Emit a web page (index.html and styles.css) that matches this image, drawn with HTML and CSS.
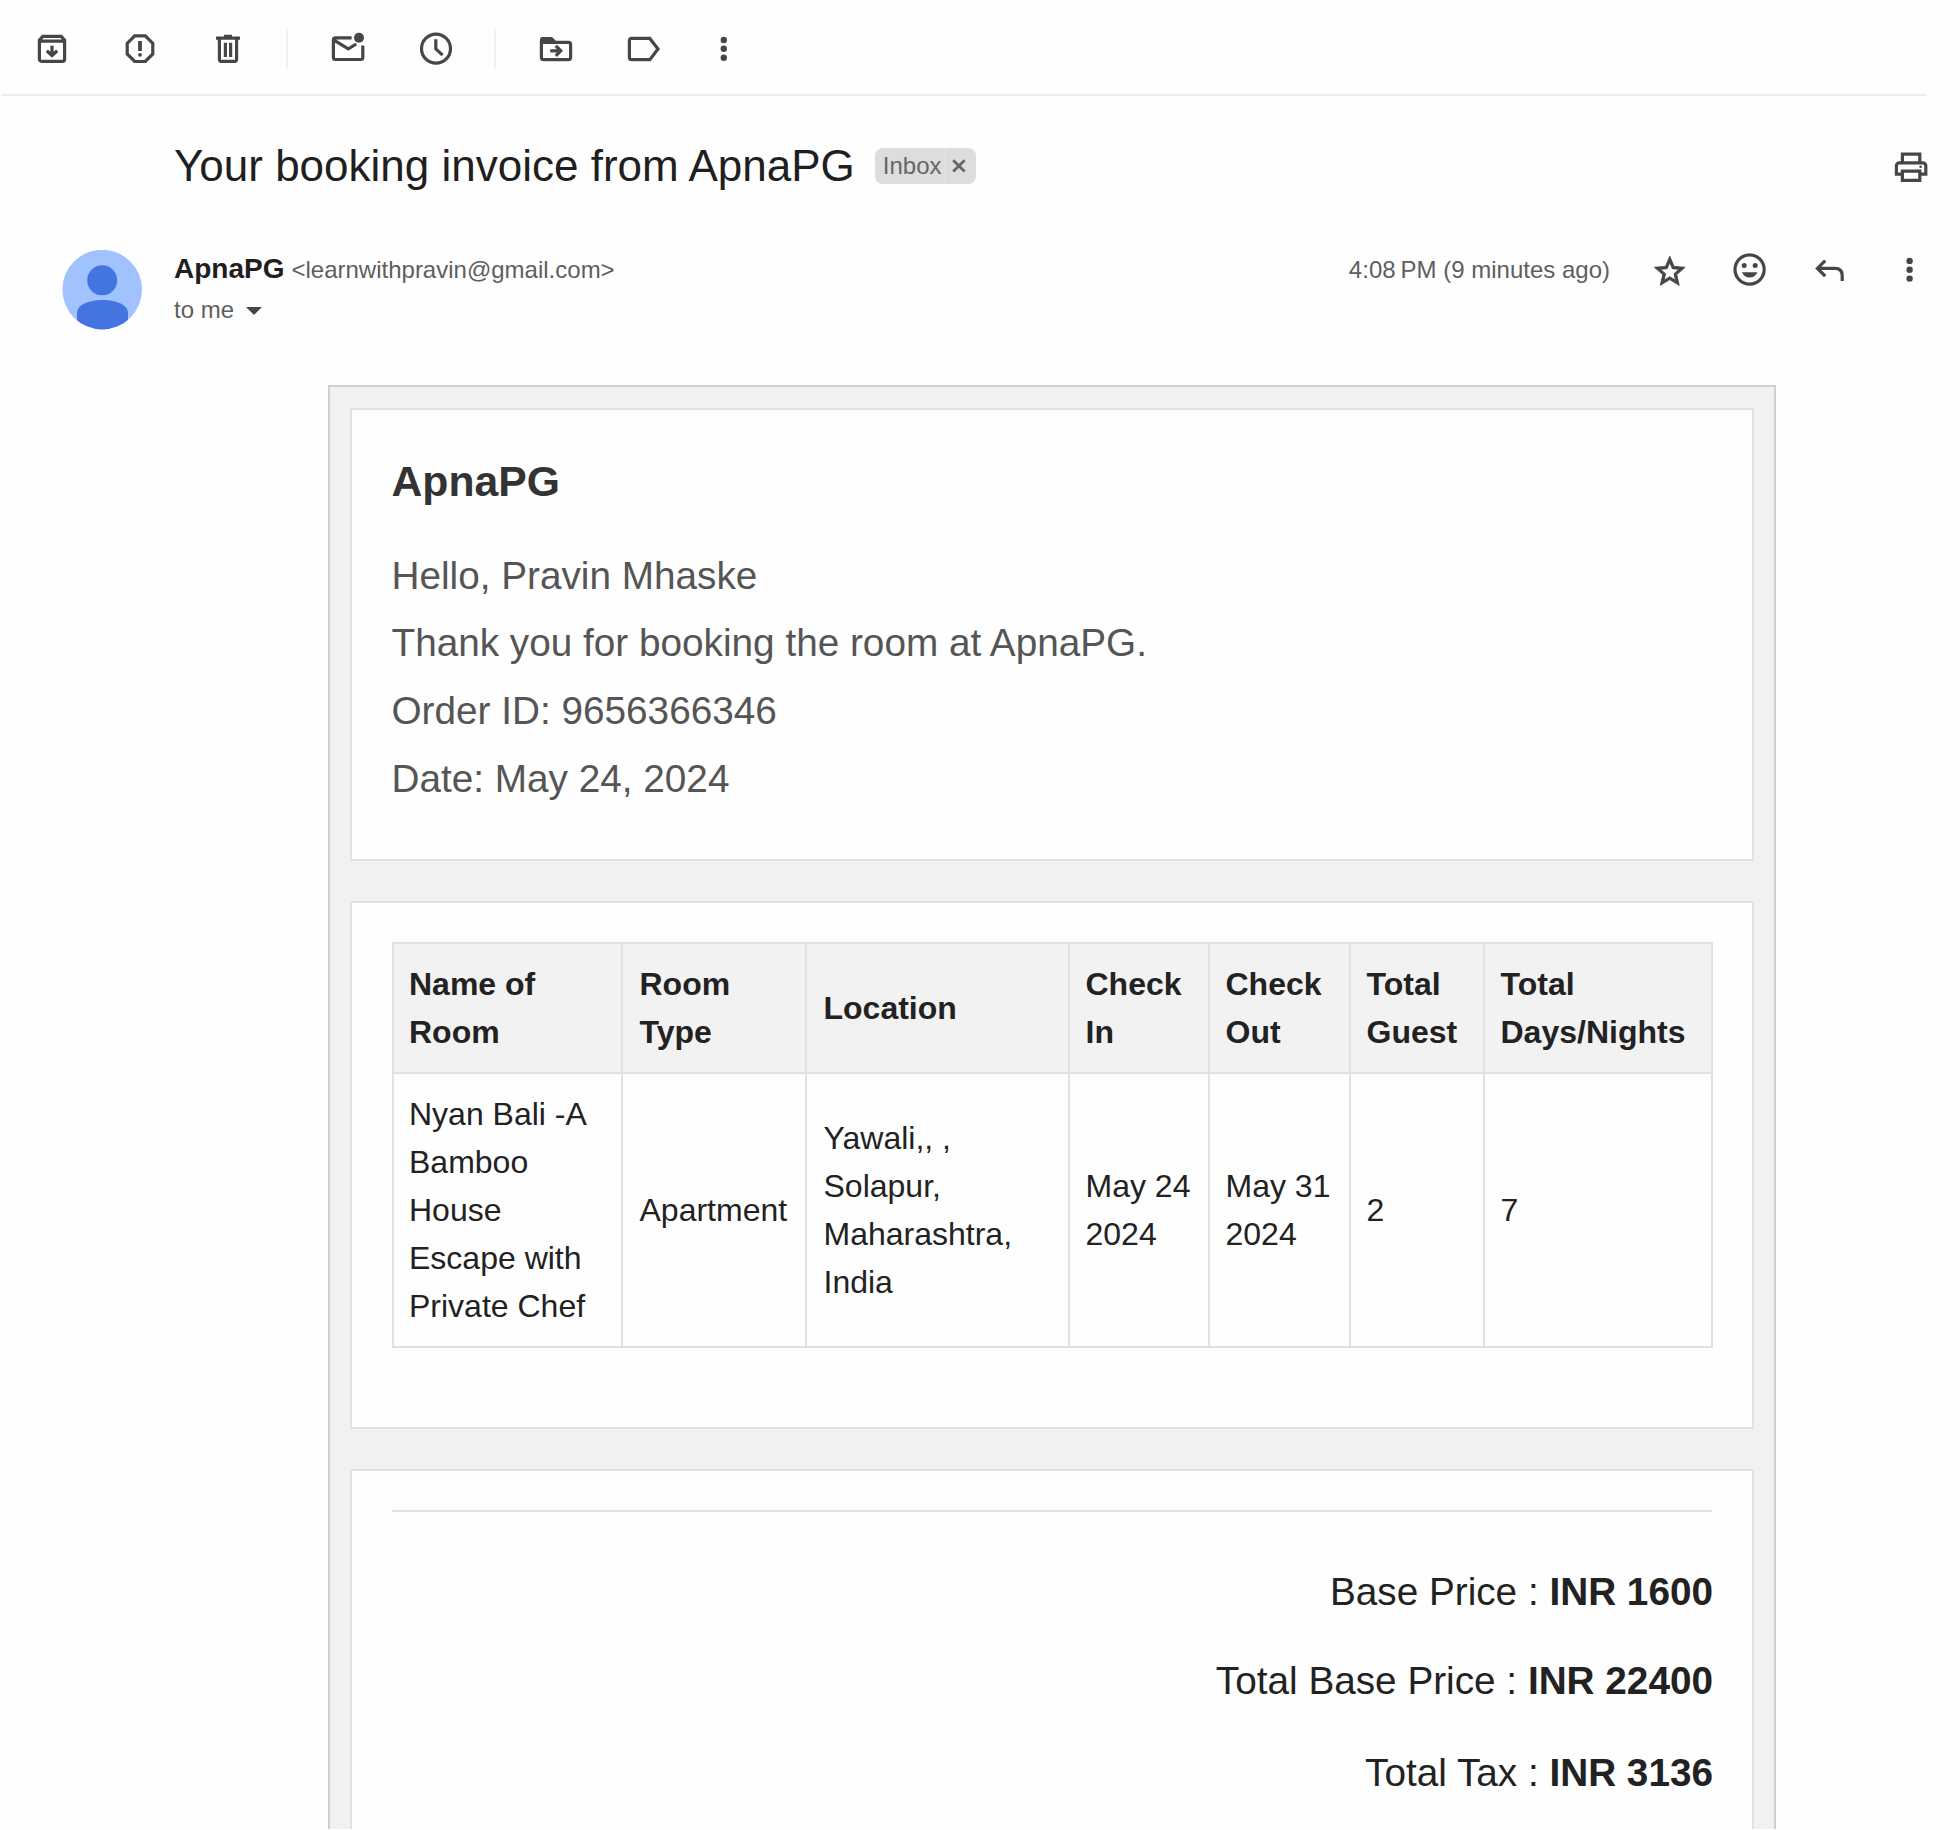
FILE: index.html
```html
<!DOCTYPE html>
<html lang="en">
<head>
<meta charset="utf-8">
<title>Your booking invoice from ApnaPG</title>
<link rel="stylesheet" href="styles.css">
</head>
<body>
<div class="page">
  <div class="toolbar">
    <div class="tool-group">
      <svg class="icon" viewBox="0 0 40 40"><path d="M7.4 13.3V31.3a2 2 0 0 0 2 2H30.6a2 2 0 0 0 2-2V12l-3.4-3.7H10.8L7.4 12v1.2H32.6M20 17.7v9M14.8 22.7l5.2 4.8 5.2-4.8"/></svg>
      <svg class="icon" viewBox="0 0 40 40"><path d="M14.7 7.9H25.3L32.8 15.4V26L25.3 33.5H14.7L7.2 26V15.4Z"/><path class="thick" d="M20 13v10"/><circle class="fill" cx="20" cy="26.8" r="1.9"/></svg>
      <svg class="icon" viewBox="0 0 40 40"><path d="M8 10.2H32M16 8.4h8M11.4 11V31.3a2 2 0 0 0 2 2H26.6a2 2 0 0 0 2-2V11M17.4 14.7v14.3M22.6 14.7v14.3"/></svg>
    </div>
    <div class="divider"></div>
    <div class="tool-group">
      <svg class="icon" viewBox="0 0 40 40"><path d="M23.6 9.9H7.4a2 2 0 0 0-2 2V29.5a2 2 0 0 0 2 2H32.8a2 2 0 0 0 2-2V17.4M5.6 11.8L20.3 20.8 28.3 16"/><circle class="fill" cx="31" cy="9.8" r="5"/></svg>
      <svg class="icon" viewBox="0 0 40 40"><circle cx="20" cy="20.7" r="14.5"/><path d="M19.8 11.2V20.8l6.8 6.3"/></svg>
    </div>
    <div class="divider"></div>
    <div class="tool-group">
      <svg class="icon" viewBox="0 0 40 40"><path class="fill" d="M4 15V11.4A2.4 2.4 0 0 1 6.4 9H15.2a2 2 0 0 1 1.4.6L20 13v3Z"/><path d="M5.4 14.4H32.6a2 2 0 0 1 2 2V29.6a2 2 0 0 1-2 2H7.4a2 2 0 0 1-2-2ZM14.2 22.8H25M19.8 17.8l5 5-5 5"/></svg>
      <svg class="icon" viewBox="0 0 40 40"><path d="M7.4 10.4H25.8L34 20.9 25.8 31.6H7.4a2 2 0 0 1-2-2V12.4a2 2 0 0 1 2-2Z"/></svg>
    </div>
    <svg class="icon more" viewBox="0 0 40 40"><g class="fill"><circle cx="19.8" cy="12" r="3.2"/><circle cx="19.8" cy="20.8" r="3.2"/><circle cx="19.8" cy="29.7" r="3.2"/></g></svg>
  </div>

  <div class="subject-row">
    <h1 class="subject">Your booking invoice from ApnaPG</h1>
    <div class="chip">
      <span class="chip-name">Inbox</span>
      <span class="chip-close"><svg class="close-icon" viewBox="0 0 14 14"><path d="M1.2 1.2l11.4 11.4M12.6 1.2L1.2 12.6"/></svg></span>
    </div>
    <svg class="icon print" viewBox="0 0 40 40"><path d="M11.4 16V7.2H28.8V16M11 27.2H5.4V18.8a3 3 0 0 1 3-3H31.8a3 3 0 0 1 3 3V27.2H29M11.4 24.2H28.8V33.4H11.4Z"/><circle class="fill" cx="29.6" cy="19.8" r="1.3"/></svg>
  </div>

  <div class="message-head">
    <svg class="avatar" viewBox="0 0 80 80"><defs><clipPath id="round"><circle cx="40.2" cy="39.6" r="39.8"/></clipPath></defs><g clip-path="url(#round)"><rect width="80" height="80" fill="#a0c3ff"/><circle cx="40.2" cy="30.3" r="15" fill="#4374e0"/><path fill="#4374e0" d="M15 80V63C15 55 26 50 40.4 50S66 55 66 63V80Z"/></g></svg>
    <div class="sender">
      <div class="sender-line"><span class="sender-name">ApnaPG</span><span class="sender-mail">&lt;learnwithpravin@gmail.com&gt;</span></div>
      <div class="recipient">to me<span class="caret"></span></div>
    </div>
    <div class="actions">
      <span class="time">4:08<span class="meridiem">PM</span> (9 minutes ago)</span>
      <svg class="icon star" viewBox="0 0 40 40"><path transform="translate(1.4 4.2) scale(1.53)" d="M22 9.24l-7.19-.62L12 2 9.19 8.63 2 9.24l5.46 4.73L5.82 21 12 17.27 18.18 21l-1.63-7.03L22 9.24zM12 15.4l-3.76 2.27 1-4.28-3.32-2.88 4.38-.38L12 6.1l1.71 4.04 4.38.38-3.32 2.88 1 4.28L12 15.4z"/></svg>
      <svg class="icon" viewBox="0 0 40 40"><circle cx="19.6" cy="20.5" r="14.6"/><g class="fill"><circle cx="14.2" cy="16.4" r="2.5"/><circle cx="25.2" cy="16.4" r="2.5"/><path d="M12 23.2H27.4C26 26.6 23.2 28.6 19.7 28.6S13.4 26.6 12 23.2Z"/></g></svg>
      <svg class="icon" viewBox="0 0 40 40"><path d="M15.2 11.6l-7.8 7.8 7.8 7.8M7.4 19.4H25C29.6 19.4 32.2 22 32.2 26.6V32"/></svg>
      <svg class="icon" viewBox="0 0 40 40"><g class="fill"><circle cx="19.6" cy="11.9" r="3.2"/><circle cx="19.6" cy="20.7" r="3.2"/><circle cx="19.6" cy="29.6" r="3.2"/></g></svg>
    </div>
  </div>

  <div class="invoice">
    <section class="card card-intro">
      <h2 class="brand">ApnaPG</h2>
      <p class="intro">Hello, Pravin Mhaske</p>
      <p class="intro">Thank you for booking the room at ApnaPG.</p>
      <p class="intro">Order ID: 9656366346</p>
      <p class="intro">Date: May 24, 2024</p>
    </section>
    <section class="card card-rooms">
      <table class="rooms">
        <colgroup><col class="c-name"><col class="c-type"><col class="c-location"><col class="c-in"><col class="c-out"><col class="c-guest"><col class="c-nights"></colgroup>
        <thead>
          <tr><th>Name of<br>Room</th><th>Room<br>Type</th><th>Location</th><th>Check<br>In</th><th>Check<br>Out</th><th>Total<br>Guest</th><th>Total<br>Days/Nights</th></tr>
        </thead>
        <tbody>
          <tr><td>Nyan Bali -A<br>Bamboo<br>House<br>Escape with<br>Private Chef</td><td>Apartment</td><td>Yawali,, ,<br>Solapur,<br>Maharashtra,<br>India</td><td>May 24<br>2024</td><td>May 31<br>2024</td><td>2</td><td>7</td></tr>
        </tbody>
      </table>
    </section>
    <section class="card card-totals">
      <hr class="rule">
      <div class="total">Base Price : <b>INR 1600</b></div>
      <div class="total total-base">Total Base Price : <b>INR 22400</b></div>
      <div class="total total-tax">Total Tax : <b>INR 3136</b></div>
    </section>
  </div>
</div>
</body>
</html>
```
FILE: styles.css
```css
* { box-sizing: border-box; }
body {
  margin: 0;
  background: #fefefe;
  color: #222;
  font-family: "Liberation Sans", Arial, sans-serif;
}
.page {
  width: 1960px;
  height: 1829px;
  overflow: hidden;
  display: flex;
  flex-direction: column;
}
.icon {
  display: block;
  flex: none;
  width: 40px;
  height: 40px;
  fill: none;
  stroke: #444746;
  stroke-width: 3.2;
}
.icon .fill { fill: #444746; stroke: none; }
.icon .thick { stroke-width: 3.8; }
.star { fill: #444746; stroke-width: 0.6; }

.toolbar {
  flex: none;
  display: flex;
  align-items: flex-start;
  height: 96px;
  margin: 0 34px 0 2px;
  padding: 28px 0 0 30px;
  border-bottom: 2px solid #e9eef3;
}
.tool-group { display: flex; gap: 48px; }
.divider {
  width: 2px;
  height: 40px;
  margin: 1px 40px 0 38px;
  background: #ecf1f3;
}
.more { margin-left: 40px; }

.subject-row {
  flex: none;
  display: flex;
  align-items: center;
  height: 56px;
  margin-top: 42px;
  padding: 0 29px 0 174px;
}
.subject {
  margin: 0;
  font-size: 44px;
  font-weight: 400;
  line-height: 56px;
  color: #1f1f1f;
  white-space: nowrap;
}
.chip {
  display: flex;
  height: 36px;
  margin-left: 20px;
  border-radius: 8px;
  background: #ddd;
  color: #666;
  font-size: 24px;
  line-height: 35px;
}
.chip-name {
  width: 71px;
  padding-left: 8px;
  border-right: 1px solid #e8e8e8;
}
.chip-close {
  width: 30px;
  display: flex;
  align-items: center;
  justify-content: center;
  padding: 0 3px 1px 0;
}
.close-icon {
  width: 14px;
  height: 14px;
  fill: none;
  stroke: #666;
  stroke-width: 2.8;
}
.print { margin: 2px 0 0 auto; }

.message-head {
  flex: none;
  display: flex;
  align-items: flex-start;
  height: 80px;
  margin-top: 56px;
  padding: 0 30px 0 62px;
}
.avatar { display: block; width: 80px; height: 80px; margin-right: 32px; }
.sender { margin-top: -1px; line-height: 40px; }
.sender-line { display: flex; align-items: baseline; height: 40px; }
.sender-name { font-size: 28px; font-weight: 700; color: #1f1f1f; }
.sender-mail { margin-left: 7px; font-size: 24px; color: #5e5e5e; }
.recipient {
  display: flex;
  align-items: center;
  margin-top: 1px;
  font-size: 24px;
  color: #5e5e5e;
}
.caret {
  margin: 1px 0 0 12px;
  border: 8px solid transparent;
  border-top-color: #444746;
  border-bottom: 0;
}
.actions {
  display: flex;
  gap: 40px;
  margin: -1px 0 0 auto;
}
.time { font-size: 24px; line-height: 41px; color: #5e5e5e; white-space: nowrap; }
.meridiem { margin-left: 5px; }

.invoice {
  flex: none;
  width: 1448px;
  height: 1500px;
  margin: 55px 0 0 328px;
  padding: 21px 20px 0;
  border: 2px solid #d0d0d0;
  background: #f1f1f1;
}
.card {
  margin-bottom: 40px;
  padding: 40px;
  border: 2px solid #e1e1e1;
  background: #fefefe;
}
.card-intro { height: 453px; padding-left: 39.5px; }
.brand {
  margin: 0 0 29px;
  font-size: 42.7px;
  line-height: 62.5px;
  color: #333;
}
.intro {
  margin: 0;
  font-size: 38.72px;
  line-height: 67.9px;
  color: #555;
}
.card-rooms { height: 528px; padding-top: 39px; }
.rooms {
  width: 1319px;
  table-layout: fixed;
  border-collapse: collapse;
  font-size: 32px;
  line-height: 48px;
}
.rooms th, .rooms td {
  padding: 0 0 0 15px;
  border: 2px solid #e1e1e1;
  text-align: left;
  vertical-align: middle;
  white-space: nowrap;
}
.rooms th:nth-child(2), .rooms td:nth-child(2),
.rooms th:nth-child(3), .rooms td:nth-child(3) { padding-left: 16.5px; }
.rooms th:nth-child(n+4), .rooms td:nth-child(n+4) { padding-left: 15.5px; }
.rooms th { height: 130px; background: #f2f2f2; }
.rooms td { height: 274px; }
.c-name { width: 229px; }
.c-type { width: 184px; }
.c-location { width: 263px; }
.c-in { width: 140px; }
.c-out { width: 141px; }
.c-guest { width: 134px; }
.c-nights { width: 228px; }

.card-totals { height: 500px; padding-top: 39px; }
.rule {
  height: 2px;
  margin: 0 0 35px;
  border: 0;
  background: #e1e1e1;
}
.total {
  margin-right: -1px;
  font-size: 38.72px;
  line-height: 90px;
  text-align: right;
}
.total-base { margin-top: -1px; }
.total-tax { margin-top: 2px; }
```
